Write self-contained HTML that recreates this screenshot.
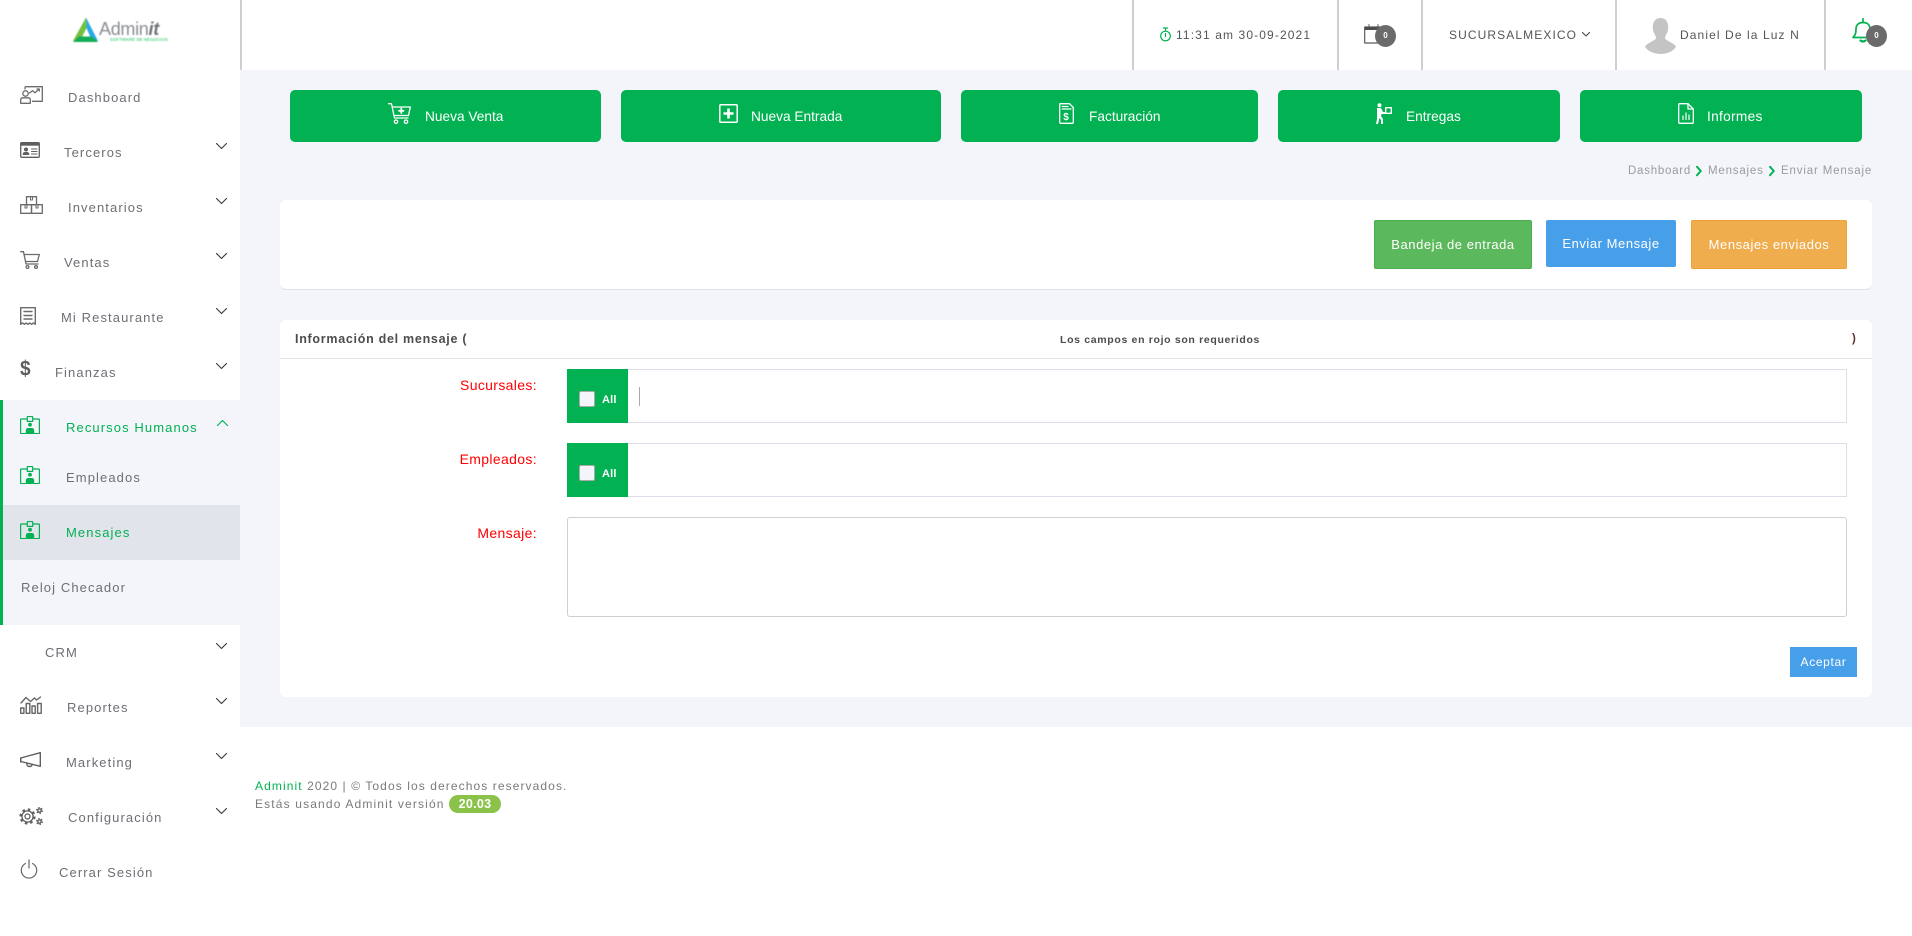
<!DOCTYPE html>
<html lang="es"><head><meta charset="utf-8"><title>Adminit</title>
<style>
*{box-sizing:border-box}
html,body{margin:0;padding:0;width:1912px;height:936px;overflow:hidden;background:#fff;font-family:"Liberation Sans",sans-serif}
.a{position:absolute;white-space:nowrap}
.t{line-height:16px;height:16px}
.s{font-size:13px;letter-spacing:1.1px;color:#6d6f75;margin-top:1px}
.g{color:#02b152!important}
.bar{background:#cfcfcf;width:2px;height:70px;top:0}
.qb{background:#02b152;border-radius:5px;top:90px;height:52px}
.ql{color:#fff;font-size:13.7px;top:109px}
svg{position:absolute;overflow:visible;fill:none;stroke-linecap:round;stroke-linejoin:round}
.cb{font-size:13px;letter-spacing:.55px;color:#fff;text-align:center}
.card{background:#fff;border-radius:6px}
.lab{color:#f00;font-size:14px;letter-spacing:.35px;right:1375px}
.inp{left:567px;width:1280px;height:54px;border:1px solid #dddfe8}
.gb{left:567px;width:61px;height:54px;background:#02b152}
.ck{left:579px;width:16px;height:16px;background:#f3f5fa;border:1px solid #aaa;border-radius:2px}
.all{left:602px;color:#fff;font-size:11px;font-weight:bold;letter-spacing:.2px}
</style></head><body>
<svg width="0" height="0" style="position:absolute"><defs>
<symbol id="chev" viewBox="0 0 11 6"><path d="M.5.5 5.5 5.5 10.5.5" fill="none" stroke="#3d4148" stroke-width="1.2"/></symbol>
<symbol id="idc" viewBox="0 0 20 18"><path d="M7 3H1.2Q.6 3 .6 3.7V17Q.6 17.6 1.2 17.6H18.8Q19.4 17.6 19.4 17V3.7Q19.4 3 18.8 3H13M7.3 5.4V1.2Q7.3.5 8 .5H12Q12.7.5 12.7 1.2V5.4Z" fill="none" stroke="#02b152" stroke-width="1.2"/><circle cx="10" cy="8.7" r="1.9" fill="#02b152"/><path d="M5.8 17V15Q5.8 12 8 12H12Q14.2 12 14.2 15V17Z" fill="#02b152"/></symbol>
</defs></svg>

<!-- main background -->
<div class="a" style="left:240px;top:70px;width:1672px;height:657px;background:#f3f5fa"></div>

<!-- logo -->
<svg style="left:72px;top:17px;filter:blur(.45px)" width="100" height="27" viewBox="0 0 100 27">
<path d="M14 .5 1 24H8L14.500 11Z" fill="#74bf3f"/><path d="M14 .5 26 24H20L14.500 11Z" fill="#29a9e6"/><path d="M1 25 7 19.500H20L26 25Z" fill="#14ad55"/>
<text x="27" y="18" font-family="Liberation Sans" font-size="18" fill="#8a8d93" stroke="none" letter-spacing="-.3">Admin<tspan font-weight="bold" font-style="italic" fill="#6f7278">it</tspan></text>
<text x="38" y="24" font-family="Liberation Sans" font-size="4.300" font-weight="bold" fill="#58d488" stroke="none" letter-spacing=".1">SOFTWARE DE NEGOCIOS</text>
</svg>

<!-- top bar -->
<div class="a bar" style="left:240px"></div>
<div class="a bar" style="left:1132px"></div>
<div class="a bar" style="left:1337px"></div>
<div class="a bar" style="left:1421px"></div>
<div class="a bar" style="left:1615px"></div>
<div class="a bar" style="left:1824px"></div>

<svg style="left:1160px;top:26px" width="11" height="17" viewBox="0 0 11 17" stroke="#02b152" stroke-width="1.2"><circle cx="5.5" cy="10" r="4.8"/><path d="M3.5 2H7.5M5.5 2V5M5.5 7.5V10.5"/></svg>
<div class="a t" style="left:1176px;top:27px;font-size:12px;letter-spacing:1.12px;color:#555">11:31 am 30-09-2021</div>

<svg style="left:1364px;top:24px" width="20" height="20" viewBox="0 0 20 20"><rect x=".7" y="3" width="18.600" height="16" stroke="#5b5b5b" stroke-width="1.200"/><rect x=".7" y="3" width="18.600" height="3" fill="#4e4e4e"/><path d="M5 .5V3M14 .5V3" stroke="#5b5b5b"/></svg>
<div class="a" style="left:1375px;top:25px;width:21px;height:22px;border-radius:50%;background:#6b6b6b;color:#fff;font-size:8px;font-weight:bold;line-height:22px;text-align:center">0</div>

<div class="a t" style="left:1449px;top:27px;font-size:12px;letter-spacing:1.1px;color:#555">SUCURSALMEXICO</div>
<svg style="left:1582px;top:32px" width="8" height="5" viewBox="0 0 8 5"><path d="M.5.5 4 4 7.5.5" stroke="#444" stroke-width="1"/></svg>

<svg style="left:1644px;top:18px" width="33" height="36" viewBox="0 0 33 36"><path d="M16.500 0C10.500 0 8.500 5 8.800 10.500 9.200 15 11.500 17 12 19.500 12.400 22.500 4 24 1 28.500 3 33 10 36 16.500 36 23 36 30 33 32 28.500 29 24 20.600 22.500 21 19.500 21.500 17 23.800 15 24.200 10.500 24.500 5 22.500 0 16.500 0Z" fill="#c4c4c4"/></svg>
<div class="a t" style="left:1680px;top:27px;width:118px;overflow:hidden;font-size:12px;letter-spacing:1.1px;color:#555">Daniel De la Luz Navarro</div>

<svg style="left:1852px;top:18px" width="22" height="25" viewBox="0 0 22 25" stroke="#02b152" stroke-width="1.700"><path d="M1 19.500H21C18.500 17 18 15 18 11 18 7 15.500 4.500 11 4.500 6.500 4.500 4 7 4 11 4 15 3.500 17 1 19.500Z"/><path d="M11 .8V4.500" /><path d="M8.500 22.500Q11 24.500 13.500 22.500" stroke-width="2.200"/></svg>
<div class="a" style="left:1866px;top:25px;width:21px;height:22px;border-radius:50%;background:#6b6b6b;color:#fff;font-size:8px;font-weight:bold;line-height:22px;text-align:center">0</div>

<!-- sidebar -->
<div class="a" style="left:0;top:400px;width:240px;height:225px;background:#f3f5fa"></div>
<div class="a" style="left:0;top:400px;width:3px;height:225px;background:#02b152"></div>
<div class="a" style="left:3px;top:505px;width:237px;height:55px;background:#e1e4eb"></div>

<div class="a t s" style="left:68px;top:89px">Dashboard</div>
<div class="a t s" style="left:64px;top:144px">Terceros</div>
<div class="a t s" style="left:68px;top:199px">Inventarios</div>
<div class="a t s" style="left:64px;top:254px">Ventas</div>
<div class="a t s" style="left:61px;top:309px">Mi Restaurante</div>
<div class="a t s" style="left:55px;top:364px">Finanzas</div>
<div class="a t s g" style="left:66px;top:419px">Recursos Humanos</div>
<div class="a t s" style="left:66px;top:469px">Empleados</div>
<div class="a t s g" style="left:66px;top:524px">Mensajes</div>
<div class="a t s" style="left:21px;top:579px">Reloj Checador</div>
<div class="a t s" style="left:45px;top:644px">CRM</div>
<div class="a t s" style="left:67px;top:699px">Reportes</div>
<div class="a t s" style="left:66px;top:754px">Marketing</div>
<div class="a t s" style="left:68px;top:809px">Configuración</div>
<div class="a t s" style="left:59px;top:864px">Cerrar Sesión</div>

<svg style="left:216px;top:143px" width="11" height="6"><use href="#chev"/></svg>
<svg style="left:216px;top:198px" width="11" height="6"><use href="#chev"/></svg>
<svg style="left:216px;top:253px" width="11" height="6"><use href="#chev"/></svg>
<svg style="left:216px;top:308px" width="11" height="6"><use href="#chev"/></svg>
<svg style="left:216px;top:363px" width="11" height="6"><use href="#chev"/></svg>
<svg style="left:217px;top:420px" width="11" height="6" viewBox="0 0 11 6"><path d="M.5 5.500 5.500.5 10.500 5.500" stroke="#02b152" stroke-width="1.200"/></svg>
<svg style="left:216px;top:643px" width="11" height="6"><use href="#chev"/></svg>
<svg style="left:216px;top:698px" width="11" height="6"><use href="#chev"/></svg>
<svg style="left:216px;top:753px" width="11" height="6"><use href="#chev"/></svg>
<svg style="left:216px;top:808px" width="11" height="6"><use href="#chev"/></svg>

<!-- sidebar icons -->
<svg style="left:20px;top:86px" width="23" height="18" viewBox="0 0 23 18" stroke="#6b6b6b" stroke-width="1.300"><circle cx="5.500" cy="7.500" r="2.700"/><path d="M.7 17.300V14Q.7 11.800 3 11.800H8Q10.300 11.800 10.300 14V17.300Z"/><path d="M5 3V1.800Q5 .7 6 .7H22.300V15.300H12.500"/><path d="M9.500 7 12.500 4.800 15 6.800 19 3.200M17 3H19.300V5"/></svg>
<svg style="left:20px;top:142px" width="20" height="16" viewBox="0 0 20 16"><rect x=".7" y=".7" width="18.600" height="14.600" rx="1" stroke="#5f5f5f" stroke-width="1.300"/><rect x=".7" y=".7" width="18.600" height="3" fill="#5f5f5f"/><circle cx="6" cy="7.500" r="2" fill="#5f5f5f"/><path d="M2.800 13V11.800Q3 10 5 10H7Q9 10 9.200 11.800V13Z" fill="#5f5f5f"/><path d="M11.500 7H17M11.500 9.500H17M11.500 12H17" stroke="#5f5f5f" stroke-width="1.100"/></svg>
<svg style="left:20px;top:196px" width="23" height="18" viewBox="0 0 23 18" stroke="#6b6b6b" stroke-width="1.300"><rect x="6.500" y=".7" width="10" height="8"/><rect x=".7" y="8.700" width="10.800" height="8.600"/><rect x="11.500" y="8.700" width="10.800" height="8.600"/><path d="M10.500 1V4H12.500V1M5 9V12H7V9M16 9V12H18V9" stroke-width="1"/></svg>
<svg style="left:20px;top:251px" width="20" height="18" viewBox="0 0 20 18" stroke="#6b6b6b" stroke-width="1.300"><path d="M.7.7H3.500L6 13H18"/><path d="M4 3.500H19.300L17.500 10.500H5.500"/><circle cx="7.500" cy="16" r="1.400"/><circle cx="16" cy="16" r="1.400"/></svg>
<svg style="left:20px;top:307px" width="16" height="18" viewBox="0 0 16 18" stroke="#6b6b6b" stroke-width="1.400"><path d="M.7.7H15.300V17.300L13.500 16 11.500 17.300 9.500 16 8 17.300 6 16 4.500 17.300 2.500 16 .7 17.300Z"/><path d="M4 4.500H12M4 8.500H12M4 12H12"/></svg>
<div class="a" style="left:20px;top:359px;width:11px;font-size:19px;line-height:22px;color:#5f5f5f;font-weight:bold;transform:scaleY(1.1)">$</div>
<svg style="left:20px;top:416px" width="20" height="18"><use href="#idc"/></svg>
<svg style="left:20px;top:466px" width="20" height="18"><use href="#idc"/></svg>
<svg style="left:20px;top:521px" width="20" height="18"><use href="#idc"/></svg>
<svg style="left:20px;top:696px" width="22" height="18" viewBox="0 0 22 18" stroke="#666" stroke-width="1.400"><path d="M1 7 6 1.500 10.500 5.500 14.500 2 16.500 4 20.500 1"/><rect x=".7" y="12" width="3.200" height="5.300"/><rect x="6.200" y="7.500" width="3.600" height="9.800"/><rect x="12" y="10" width="3.200" height="7.300"/><rect x="17.600" y="7.500" width="3.600" height="9.800"/></svg>
<svg style="left:20px;top:752px" width="21" height="16" viewBox="0 0 21 16" stroke="#5f5f5f" stroke-width="1.400"><path d="M20.300.7V14.300L.7 9.500V6Z"/><path d="M.7 6V10M7 11Q6.500 14.500 9.500 14.500 12 14.500 12 12.200"/></svg>
<svg style="left:20px;top:807px" width="23" height="18" viewBox="0 0 23 18" stroke="#5f5f5f" stroke-width="1.300"><circle cx="7.500" cy="9.500" r="2.500"/><circle cx="7.500" cy="9.500" r="5.600"/><circle cx="7.500" cy="9.500" r="7" stroke-width="2.200" stroke-dasharray="2.600 2.900" stroke-linecap="butt"/><circle cx="19.500" cy="3.500" r="1.700" stroke-width="1.400"/><circle cx="19.500" cy="3.500" r="2.900" stroke-width="1.200" stroke-dasharray="1.500 1.500" stroke-linecap="butt"/><circle cx="19.500" cy="14.500" r="1.700" stroke-width="1.400"/><circle cx="19.500" cy="14.500" r="2.900" stroke-width="1.200" stroke-dasharray="1.500 1.500" stroke-linecap="butt"/></svg>
<svg style="left:20px;top:860px" width="18" height="18" viewBox="0 0 18 18" stroke="#666" stroke-width="1.200"><path d="M5.500 3.500A7.700 7.700 0 1 0 12.500 3.500M9 0V8"/></svg>

<!-- quick buttons -->
<div class="a qb" style="left:290px;width:311px"></div>
<div class="a qb" style="left:621px;width:320px"></div>
<div class="a qb" style="left:961px;width:297px"></div>
<div class="a qb" style="left:1278px;width:282px"></div>
<div class="a qb" style="left:1580px;width:282px"></div>
<div class="a t ql" style="left:425px">Nueva Venta</div>
<div class="a t ql" style="left:751px">Nueva Entrada</div>
<div class="a t ql" style="left:1089px">Facturación</div>
<div class="a t ql" style="left:1406px">Entregas</div>
<div class="a t ql" style="left:1707px;letter-spacing:.3px">Informes</div>

<svg style="left:388px;top:103px" width="23" height="21" viewBox="0 0 23 21" stroke="#fff" stroke-width="1.300"><path d="M.7.7H3.500L6.500 15H20"/><path d="M4.200 4H22.300L20.500 12.500H6"/><circle cx="8" cy="18.700" r="1.700"/><circle cx="18" cy="18.700" r="1.700"/><path d="M13.300 5.500V10M11 7.800H15.500" stroke-width="1.800"/></svg>
<svg style="left:719px;top:104px" width="19" height="19" viewBox="0 0 19 19" stroke="#fff" stroke-width="1.500"><rect x=".8" y=".8" width="17.400" height="17.400" rx="1"/><path d="M9.500 4.500V14.500M4.500 9.500H14.500" stroke-width="2.600" stroke-linecap="butt"/></svg>
<svg style="left:1059px;top:103px" width="15" height="21" viewBox="0 0 15 21" stroke="#fff" stroke-width="1.300"><path d="M.7 1.700Q.7.700 1.700.700H10.500L14.300 4.500V19.300Q14.300 20.300 13.300 20.300H1.700Q.7 20.300.7 19.300Z"/><path d="M3.200 3.500H9M3.200 6H12"/><text x="4.300" y="17" font-family="Liberation Sans" font-size="10" font-weight="bold" fill="#fff" stroke="none">$</text></svg>
<svg style="left:1376px;top:103px" width="16" height="21" viewBox="0 0 16 21"><circle cx="3.500" cy="2.200" r="2" fill="#fff"/><path d="M1 5H5L7 9H9V11H5.500L5 13 7 16 7 21H5V17L3.500 15 3 17 2 21H0L1 16Z" fill="#fff"/><rect x="9.700" y="4.700" width="5.600" height="5.600" stroke="#fff" stroke-width="1.400"/></svg>
<svg style="left:1678px;top:103px" width="16" height="21" viewBox="0 0 16 21" stroke="#fff" stroke-width="1.300"><path d="M.7 1.700Q.7.700 1.700.700H10L15.300 6V19.300Q15.300 20.300 14.300 20.300H1.700Q.7 20.300.7 19.300Z"/><path d="M10 .7V6H15.300"/><path d="M5 16.500V13M8 16.500V10M11 16.500V12" stroke-width="1.200"/></svg>

<!-- breadcrumb -->
<div class="a t" style="left:1628px;top:163px;font-size:11.500px;letter-spacing:.75px;color:#9b9b9b">Dashboard</div>
<svg style="left:1696px;top:166px" width="6" height="10" viewBox="0 0 6 10"><path d="M1 .8 4.800 5 1 9.200" stroke="#02b152" stroke-width="2"/></svg>
<div class="a t" style="left:1708px;top:163px;font-size:11.500px;letter-spacing:.8px;color:#9b9b9b">Mensajes</div>
<svg style="left:1769px;top:166px" width="6" height="10" viewBox="0 0 6 10"><path d="M1 .8 4.800 5 1 9.200" stroke="#02b152" stroke-width="2"/></svg>
<div class="a t" style="left:1781px;top:163px;font-size:11.500px;letter-spacing:.85px;color:#9b9b9b">Enviar Mensaje</div>

<!-- card 1 -->
<div class="a card" style="left:280px;top:200px;width:1592px;height:90px;border-bottom:1px solid #dfe1e6"></div>
<div class="a" style="left:1374px;top:220px;width:158px;height:49px;background:#5cb85c;border:1px solid #4cae4c;border-radius:2px"></div>
<div class="a" style="left:1546px;top:220px;width:130px;height:47px;background:#489fe9;border-radius:2px"></div>
<div class="a" style="left:1691px;top:220px;width:156px;height:49px;background:#f0ad4e;border:1px solid #eea236;border-radius:2px"></div>
<div class="a t cb" style="left:1374px;top:237px;width:158px">Bandeja de entrada</div>
<div class="a t cb" style="left:1546px;top:236px;width:130px">Enviar Mensaje</div>
<div class="a t cb" style="left:1691px;top:237px;width:156px">Mensajes enviados</div>

<!-- card 2 -->
<div class="a card" style="left:280px;top:320px;width:1592px;height:377px"></div>
<div class="a" style="left:280px;top:358px;width:1592px;height:1px;background:#e4e5ea"></div>
<div class="a t" style="left:295px;top:331px;font-size:12.500px;font-weight:bold;letter-spacing:.72px;color:#4c4c4c">Información del mensaje (</div>
<div class="a t" style="left:1060px;top:332px;font-size:10.500px;font-weight:bold;letter-spacing:.67px;color:#4c4c4c">Los campos en rojo son requeridos</div>
<div class="a t" style="left:1852px;top:331px;font-size:11.500px;color:#5a3030;font-weight:bold">)</div>

<div class="a t lab" style="top:377px">Sucursales:</div>
<div class="a t lab" style="top:451px">Empleados:</div>
<div class="a t lab" style="top:525px">Mensaje:</div>

<div class="a inp" style="top:369px"></div>
<div class="a gb" style="top:369px"></div>
<div class="a ck" style="top:391px"></div>
<div class="a t all" style="top:392px">All</div>
<div class="a" style="left:639px;top:387px;width:1px;height:19px;background:#aaa"></div>

<div class="a inp" style="top:443px"></div>
<div class="a gb" style="top:443px"></div>
<div class="a ck" style="top:465px"></div>
<div class="a t all" style="top:466px">All</div>

<div class="a" style="left:567px;top:517px;width:1280px;height:100px;border:1px solid #cfcfcf;border-radius:3px"></div>

<div class="a" style="left:1790px;top:647px;width:67px;height:30px;background:#489fe9;color:#fff;font-size:12px;letter-spacing:.65px;line-height:30px;text-align:center">Aceptar</div>

<!-- footer -->
<div class="a t" style="left:255px;top:778px;font-size:12px;letter-spacing:1.09px;color:#7a7a7a"><span style="color:#02b152">Adminit</span> 2020 | © Todos los derechos reservados.</div>
<div class="a t" style="left:255px;top:796px;font-size:12px;letter-spacing:1.15px;color:#7a7a7a">Estás usando Adminit versión</div>
<div class="a" style="left:449px;top:795px;width:52px;height:18px;border-radius:9px;background:#8bc34a;color:#fff;font-size:12.500px;font-weight:bold;letter-spacing:.3px;line-height:18px;text-align:center">20.03</div>
</body></html>
